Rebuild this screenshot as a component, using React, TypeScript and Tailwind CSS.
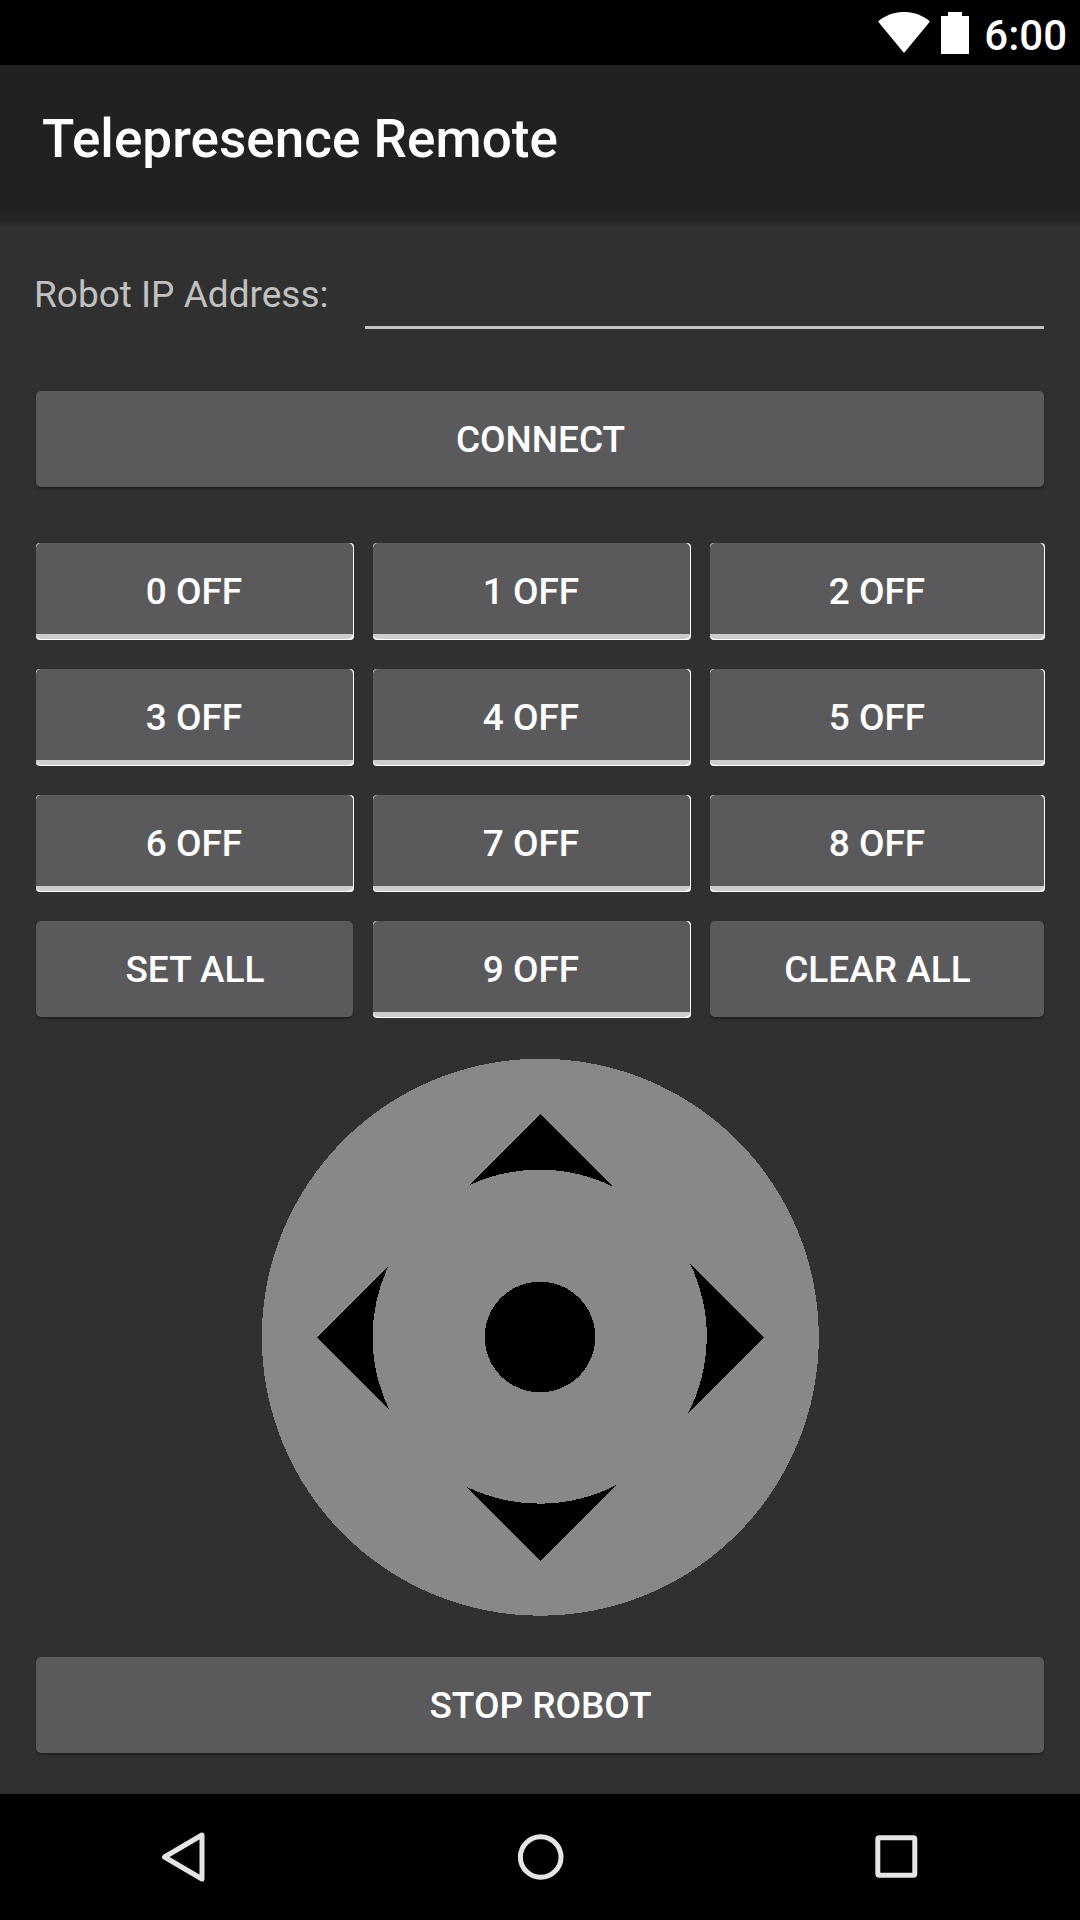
import React from "react";

function PlainButton({ label }: { label: string }) {
  return (
    <button className="flex h-24 w-full items-center justify-center rounded-[5px] bg-[#5a5a5c] pl-px text-[37px] font-medium leading-none text-white shadow-[0_2px_2px_rgba(0,0,0,0.32)]">
      {label}
    </button>
  );
}

function Toggle({ label }: { label: string }) {
  return (
    <button className="-mr-px block h-[97px] rounded-[4px] bg-white pr-px pb-px [&:nth-child(3n)>span]:pr-0">
      <span className="flex h-24 items-center justify-center overflow-hidden rounded-[5px] border-b-[5px] border-[#cdccce] bg-[#5a5a5c] pt-[5px] pr-px text-[37px] font-medium leading-none text-white">
        {label}
      </span>
    </button>
  );
}

function DirectionPad() {
  return (
    <svg width="560" height="560" viewBox="260 1057 560 560" shapeRendering="crispEdges">
      <circle cx="540.3" cy="1337.2" r="278.5" fill="#888888" />
      <circle cx="540" cy="1337" r="55.3" fill="#000" />
      <path d="M540.5 1114 L612.7 1186.5 A167 167 0 0 0 469.3 1185.2 Z" />
      <path d="M317 1337.500 L388.300 1266.300 A167 167 0 0 0 389.300 1409.500 Z" />
      <path d="M764 1337.500 L690 1263.500 A167 167 0 0 1 688 1413.300 Z" />
      <path d="M540.5 1561 L616.500 1485 A167 167 0 0 1 466.500 1486.700 Z" />
    </svg>
  );
}

const toggles = ["0 OFF", "1 OFF", "2 OFF", "3 OFF", "4 OFF", "5 OFF", "6 OFF", "7 OFF", "8 OFF"];

export default function App() {
  return (
    <div className="flex h-[1920px] w-[1080px] flex-col overflow-hidden bg-[#303030] font-['Roboto',sans-serif] text-white">
      <header className="flex h-[65px] shrink-0 items-center justify-end bg-black pr-[13px]">
        <svg width="52" height="41" viewBox="0 0 52 41" className="mr-[11px] -mt-px" fill="#fff">
          <path d="M0 9.500 C15 -3.200 37 -3.200 52 9.500 L26 41 Z" />
        </svg>
        <svg width="28" height="42" viewBox="0 0 28 42" className="mr-[15px]" fill="#fff">
          <path d="M7 0 H21 V4 H28 V42 H0 V4 H7 Z" />
        </svg>
        <span className="pt-[7px] text-[42px] font-medium leading-none">6:00</span>
      </header>

      <div className="flex h-[147px] shrink-0 items-center bg-[#212121] pt-px pl-[42px]">
        <h1 className="text-[53px] font-medium leading-none tracking-[0.05px]">Telepresence Remote</h1>
      </div>
      <div className="h-4 shrink-0 bg-linear-to-b from-[#252525] from-40% to-[#303030]" />

      <main className="flex grow flex-col px-9">
        <div className="mt-10 flex h-[61px] justify-between">
          <label className="-ml-[2px] pt-2 text-[37px] leading-none whitespace-nowrap text-[#c1c1c1]">Robot IP Address:</label>
          <input className="h-[61px] w-[679px] border-b-[3px] border-[#c1c1c1] bg-transparent" />
        </div>
        <div className="mt-[62px]">
          <PlainButton label="CONNECT" />
        </div>
        <div className="mt-14 grid auto-rows-[97px] grid-cols-[317px_317px_334px] gap-x-5 gap-y-[29px]">
          {toggles.map((label) => (
            <Toggle key={label} label={label} />
          ))}
          <PlainButton label="SET ALL" />
          <Toggle label="9 OFF" />
          <PlainButton label="CLEAR ALL" />
        </div>
        <div className="mt-[39px] flex justify-center">
          <DirectionPad />
        </div>
        <div className="mt-10">
          <PlainButton label="STOP ROBOT" />
        </div>
      </main>

      <nav className="grid h-[126px] shrink-0 grid-cols-3 items-center bg-black px-[5px]">
        <svg width="50" height="56" viewBox="158 1829 50 56" className="ml-[153px]" fill="none" stroke="#e5e5e5" strokeWidth="5" strokeLinejoin="round">
          <path d="M202 1835 V1879 L164.500 1857 Z" />
        </svg>
        <svg width="50" height="50" viewBox="515.3 1832 50 50" className="justify-self-center" fill="none" stroke="#e5e5e5" strokeWidth="5">
          <circle cx="541" cy="1857" r="20.300" />
        </svg>
        <svg width="50" height="50" viewBox="872 1832 50 50" className="ml-[154px]" fill="none" stroke="#e5e5e5" strokeWidth="5">
          <rect x="877.800" y="1837.800" width="37" height="37.400" rx="1.500" />
        </svg>
      </nav>
    </div>
  );
}
